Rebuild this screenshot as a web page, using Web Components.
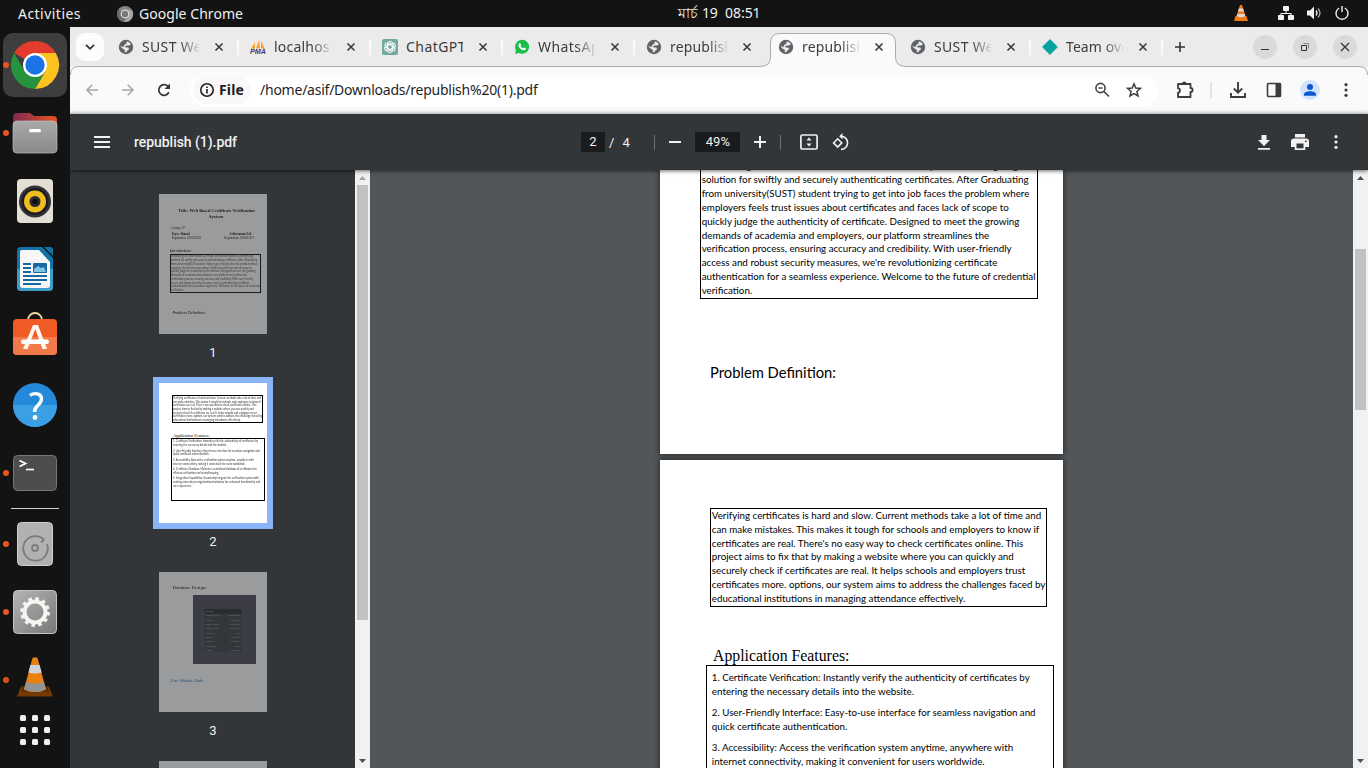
<!DOCTYPE html>
<html lang="en">
<head>
<meta charset="utf-8">
<title>republish (1).pdf</title>
<style>
html,body{margin:0;height:100%;overflow:hidden;background:#131313}
body{font-family:"Noto Sans","Open Sans",sans-serif}
</style>
</head>
<body>
<desktop-shell></desktop-shell>
<script>
const ICONS = {
chromeGrey:`<svg viewBox="0 0 16 16" width="16" height="16"><circle cx="8" cy="8" r="8" fill="#858585"/><path d="M8 8 1.2 4A8 8 0 0 0 7 16l3.400-6z" fill="#6c6c6c"/><path d="M8 4h7a8 8 0 0 1-8 12l4-6z" fill="#a5a5a5"/><circle cx="8" cy="8" r="4.400" fill="#ddd"/><circle cx="8" cy="8" r="3.200" fill="#777"/></svg>`,
chrome:`<svg viewBox="0 0 48 48" width="48" height="48"><path d="M24 24 3.200 12A24 24 0 0 1 44.800 12z" fill="#e33b2e"/><path d="M24 12H44.800A24 24 0 0 1 24 48L34.400 30z" fill="#fcc21f"/><path d="M13.600 30 3.200 12A24 24 0 0 0 24 48L34.400 30z" fill="#27933f"/><circle cx="24" cy="24" r="12" fill="#fff"/><circle cx="24" cy="24" r="9.700" fill="#1b73e8"/></svg>`,
files:`<svg viewBox="0 0 44 42" width="44" height="42"><defs><linearGradient id="a"><stop stop-color="#7d2951"/><stop offset="1" stop-color="#e95420"/></linearGradient><linearGradient id="b" x2="0" y2="1"><stop stop-color="#a9a9a9"/><stop offset="1" stop-color="#898989"/></linearGradient></defs><path d="M0 5a4 4 0 0 1 4-4h13l4 3h19a4 4 0 0 1 4 4v20H0z" fill="url(#a)"/><rect y="9" width="44" height="32" rx="4" fill="url(#b)" stroke="#bdbdbd" stroke-width=".7"/><rect x="16" y="17" width="12" height="3.200" rx="1.500" fill="#fff"/></svg>`,
rhythm:`<svg viewBox="0 0 36 44" width="36" height="44"><rect width="36" height="44" rx="4" fill="#e3dfd3"/><circle cx="18" cy="22.500" r="16" fill="#34323a"/><circle cx="18" cy="22.500" r="13.500" fill="#1d1c22"/><circle cx="18" cy="22.500" r="11" fill="#eebd20"/><circle cx="18" cy="22.500" r="5.500" fill="#2b2930"/><circle cx="18" cy="22.500" r="2.600" fill="#0b0b0b"/></svg>`,
writer:`<svg viewBox="0 0 36 44" width="36" height="44"><path d="M4 0H25L36 11V40a4 4 0 0 1-4 4H4a4 4 0 0 1-4-4V4a4 4 0 0 1 4-4z" fill="#1273a8"/><path d="M0 22h36v18a4 4 0 0 1-4 4H4a4 4 0 0 1-4-4z" fill="#3d9dca"/><path d="M27 0h7l2 2v7z" fill="#1273a8"/><path d="M5 3H22L33 15V38a3 3 0 0 1-3 3H6a3 3 0 0 1-3-3V5a2 2 0 0 1 2-2z" fill="#f7f7f7"/><g fill="#1668a0"><path d="M6 16h8v2H6zM6 20h8v2H6zM6 24h8v2H6zM6 28h24v2H6zM6 32h24v2H6zM6 36h18v2H6z"/><rect x="16" y="16" width="14" height="10" rx="1"/></g><path d="M17 25v-3l4-3 3 2 3-1 2 5z" fill="#7fc3e6"/></svg>`,
software:`<svg viewBox="0 3 44 44" width="44" height="44"><path d="M15 9V8a7 7 0 0 1 14 0v1" fill="none" stroke="#efd9ac" stroke-width="1.800"/><rect y="7" width="44" height="36" rx="4" fill="#ee5b25"/><path d="M0 25h44v14a4 4 0 0 1-4 4H4a4 4 0 0 1-4-4z" fill="#f27949"/><path d="M20 13h5l9 24h-4.500L22.300 17 14.500 37H10z" fill="#fff5ef"/><rect x="8" y="27.500" width="28" height="4.400" rx="2.200" fill="#fff"/></svg>`,
help:`<svg viewBox="0 0 44 44" width="44" height="44"><circle cx="22" cy="22" r="22" fill="#2489da"/><path d="M0 22h44a22 22 0 0 1-44 0z" fill="#3b9fe3"/><path d="M17 12.500c4-3 11.500-2.500 11.500 3.500 0 6-7 6-7 13" fill="none" stroke="#fff" stroke-width="3.400"/><circle cx="22" cy="34.500" r="2.400" fill="#fff"/></svg>`,
terminal:`<svg viewBox="0 0 44 36" width="44" height="36"><rect x=".5" y=".5" width="43" height="35" rx="4" fill="#4d4d4d" stroke="#777"/><path d="M6.500 5.500l6 3-6 3" fill="none" stroke="#fff" stroke-width="1.800"/><path d="M13 14.500h8" stroke="#fff" stroke-width="1.600"/></svg>`,
disk:`<svg viewBox="0 0 36 44" width="36" height="44"><rect x=".5" y=".5" width="35" height="43" rx="4" fill="#b1b1b1" stroke="#d0d0d0"/><path d="M27 17.500a12.300 12.300 0 1 0 3 4.500M27 17.500l-3 3" fill="none" stroke="#7c7c7c" stroke-width="1.800"/><circle cx="18" cy="26" r="3" fill="none" stroke="#7c7c7c" stroke-width="1.800"/></svg>`,
settings:`<svg viewBox="0 0 44 44" width="44" height="44"><defs><linearGradient id="a" x2="1" y2="1"><stop stop-color="#b5b5b5"/><stop offset="1" stop-color="#777"/></linearGradient></defs><rect x=".5" y=".5" width="43" height="43" rx="4" fill="url(#a)" stroke="#c4c4c4"/><circle cx="22" cy="22" r="10.500" fill="none" stroke="#f5f4f0" stroke-width="4"/><circle cx="22" cy="22" r="13.400" fill="none" stroke="#f5f4f0" stroke-width="3" stroke-dasharray="3.500 3.516"/></svg>`,
vlc:`<svg viewBox="0 3.500 38 40" width="38" height="40"><path d="M5 30h28l4 10H1z" fill="#7c3a05"/><path d="M7 30h24l2 5H5z" fill="#5d2a04"/><path d="M16.500 1.500q2.500-1.500 5 0L30 33q-11 5-22 0z" fill="#f58613"/><path d="M14.400 8.500h9.200l2 7.500q-6.600 2-13.200 0z" fill="#d9dfe4"/><path d="M10 25.500q9 3 18 0l2 7.500q-11 5-22 0z" fill="#9a9a9a"/></svg>`,
apps:`<svg viewBox="0 0 30 30" width="30" height="30" fill="#f0f0f0"><g id="r"><rect width="6" height="6" rx="1.500"/><rect x="12" width="6" height="6" rx="1.500"/><rect x="24" width="6" height="6" rx="1.500"/></g><use href="#r" y="12"/><use href="#r" y="24"/></svg>`,
cone:`<svg viewBox="0 0 14 16" width="14" height="16"><path d="M1.500 11h11l1.500 5H0z" fill="#ef7a10"/><path d="M6 0h2l4 12q-5 2.500-10 0z" fill="#ef7a10"/><path d="M5 3.500h4l1 3H4zM3.500 9h7l.7 2.300q-4 1.800-8.400 0z" fill="#d8d8d8"/></svg>`,
net:`<svg viewBox="0 0 16 14" width="16" height="14" fill="#f2f2f2"><rect x="5" y="0" width="6" height="5" rx=".8"/><rect x="0" y="9" width="6" height="5" rx=".8"/><rect x="10" y="9" width="6" height="5" rx=".8"/><path d="M7.500 4h1v3h5v2.500h-1V8h-9v1.500h-1V7h5z"/></svg>`,
vol:`<svg viewBox="0 0 15 14" width="15" height="14" fill="#f2f2f2"><path d="M0 4.500h3L7 .5v13L3 9.500H0z"/><path d="M9 4.500q2 2.500 0 5" fill="none" stroke="#f2f2f2" stroke-width="1.300"/><path d="M11 2.500q4 4.500 0 9" fill="none" stroke="#aaa" stroke-width="1.300"/></svg>`,
power:`<svg viewBox="0 0 14 14" width="14" height="14" fill="none" stroke="#f2f2f2" stroke-width="1.400"><path d="M4.200 2a6 6 0 1 0 5.600 0M7 0v6"/></svg>`,
globe:`<svg viewBox="0 0 16 16" width="16" height="16"><circle cx="8" cy="8" r="7.200" fill="#5f6368"/><path d="M8.500 2.500c2 0 3.700 1.200 4.600 2.800-1 .2-1.600 1.200-2.600 1.200S8 6.600 7.300 7.200c-.5.800.4 1.400 1.700 1.400 1.500 0 2.300.6 1.800 1.600-.6 1.100-1.600 1-2.100 2.200-.3.900-1.300 1-2 .8l.3-1.800c-.4-1.300-2-1-2.600-2.200L2.600 7.800c.2-.4.100-.7.200-1L5 8.300c1-.3.3-1.500 1.200-2.300C7 5.300 8.700 5 8.600 4z" fill="#ececec"/></svg>`,
pma:`<svg viewBox="0 0 16 16" width="16" height="16"><path d="M1 10 5 3v6.500zM6 9.500 9 1l1 8.500zM11 9.500V2l4 8z" fill="#f6a030"/><text x="0" y="15" textLength="16" lengthAdjust="spacingAndGlyphs" font-family="Liberation Sans,sans-serif" font-size="6.500" font-weight="bold" font-style="italic" fill="#3b3b78">PMA</text></svg>`,
gpt:`<svg viewBox="0 0 16 16" width="16" height="16"><rect width="16" height="16" rx="2" fill="#74aa9c"/><g fill="none" stroke="#fff" stroke-width=".9"><g id="q"><path d="M5.700 9.300V5a2.600 2.600 0 0 1 4.900-1.300M5.700 6.600 9.500 4.400l2.600 1.500"/></g><use href="#q" transform="rotate(60 8 8)"/><use href="#q" transform="rotate(120 8 8)"/><use href="#q" transform="rotate(180 8 8)"/><use href="#q" transform="rotate(240 8 8)"/><use href="#q" transform="rotate(300 8 8)"/></g></svg>`,
wa:`<svg viewBox="0 0 16 16" width="16" height="16"><path d="M1 15l1-3.700A7 7 0 1 1 4.800 14z" fill="#18bf48"/><path d="M5.300 4.300c.6-.5 1-.3 1.300.4l.5 1.200c.1.500-.6.900-.6 1.200.5 1.100 1.400 1.800 2.500 2.200.4 0 .7-.9 1.100-.8l1.500.7c.4.200.3.700.1 1.200-.5 1-1.900 1.200-3 .7C6.500 10.200 5.200 8.900 4.600 7.200c-.4-1 0-2.300.7-2.900z" fill="#fff"/></svg>`,
diamond:`<svg viewBox="0 0 16 16" width="16" height="16"><path d="M8 .6 15.400 8 8 15.400.6 8z" fill="#05a3a0" stroke="#05a3a0" stroke-linejoin="round"/></svg>`,
x:`<svg viewBox="0 0 8 8" width="8" height="8" stroke="#3a3a3a" stroke-width="1.600"><path d="M.5.5l7 7M7.500.5l-7 7"/></svg>`,
chev:`<svg viewBox="0 0 10 6" width="10" height="6" fill="none" stroke="#333" stroke-width="1.800"><path d="M1 .8 5 4.800 9 .8"/></svg>`,
plus:`<svg viewBox="0 0 10 10" width="10" height="10" stroke="#333" stroke-width="1.600"><path d="M5 0v10M0 5h10"/></svg>`,
min:`<svg viewBox="0 0 10 10" width="10" height="10" stroke="#333"><path d="M1 7.500h8"/></svg>`,
restore:`<svg viewBox="0 0 10 10" width="10" height="10" fill="none" stroke="#333"><path d="M1.500 3.500h5v5h-5z"/><path d="M3.500 1.500h5v5" stroke="#888"/></svg>`,
wx:`<svg viewBox="0 0 10 10" width="10" height="10" stroke="#333" stroke-width="1.200"><path d="M1 1l8 8M9 1 1 9"/></svg>`,
back:`<svg viewBox="0 0 12 12" width="12" height="12" fill="none" stroke="#a5a5a5" stroke-width="1.500"><path d="M12 6H1M6.300.7 1 6l5.300 5.300"/></svg>`,
fwd:`<svg viewBox="0 0 12 12" width="12" height="12" fill="none" stroke="#a5a5a5" stroke-width="1.500"><path d="M0 6h11M5.700.7 11 6l-5.300 5.300"/></svg>`,
reload:`<svg viewBox="0 0 14 14" width="14" height="14"><path d="M11.900 9.200A5.300 5.300 0 1 1 11 3.400" fill="none" stroke="#3a3a3a" stroke-width="1.800"/><path d="M13 .5V6H7.500z" fill="#3a3a3a"/></svg>`,
info:`<svg viewBox="0 0 14 14" width="14" height="14" fill="none" stroke="#1f1f1f" stroke-width="1.600"><circle cx="7" cy="7" r="6.200"/><path d="M7 6v4.500M7 3.400v1.500"/></svg>`,
zoomout:`<svg viewBox="0 0 16 16" width="16" height="16" fill="none" stroke="#444" stroke-width="1.600"><circle cx="6.500" cy="6" r="4.600"/><path d="M9.800 9.400 15 14.500M4.500 6h4"/></svg>`,
star:`<svg viewBox="0 0 16 16" width="16" height="16" fill="none" stroke="#3c3c3c" stroke-width="1.500"><path d="M8 1.800 9.800 6l4.600.4-3.500 3 1.100 4.500L8 11.500l-4 2.400 1.100-4.500-3.500-3L6.200 6z"/></svg>`,
ext:`<svg viewBox="0 0 18 18" width="18" height="18"><path d="M2 3h12.500v4c2.800 0 2.800 4 0 4v5H2v-4.300c2.600 0 2.600-4.400 0-4.400z" fill="none" stroke="#3c3c3c" stroke-width="1.800" stroke-linejoin="round"/><path d="M6 3a2.200 2.400 0 0 1 4.400 0z" fill="#3c3c3c"/></svg>`,
dl:`<svg viewBox="0 0 16 16" width="16" height="16" fill="none" stroke="#3c3c3c" stroke-width="1.900"><path d="M1 11v4h14v-4M8 0v10.500M3.800 6.500 8 10.700l4.200-4.200"/></svg>`,
panel:`<svg viewBox="0 0 16 16" width="16" height="16"><rect x="1.500" y="1.500" width="13" height="13" rx="1" fill="none" stroke="#3c3c3c" stroke-width="1.600"/><path d="M9.500 1h5.500v14H9.500z" fill="#3c3c3c"/></svg>`,
avatar:`<svg viewBox="0 0 20 20" width="20" height="20"><circle cx="10" cy="10" r="10" fill="#d3e3fd"/><circle cx="10" cy="7" r="3" fill="#0b57d0"/><path d="M4 15.800v-1.500c0-4 12-4 12 0v1.500z" fill="#0b57d0"/></svg>`,
dots:`<svg viewBox="0 0 4 16" width="4" height="16" fill="currentColor"><circle cx="2" cy="2.700" r="1.600"/><circle cx="2" cy="8" r="1.600"/><circle cx="2" cy="13.300" r="1.600"/></svg>`,
menu:`<svg viewBox="0 0 16 12" width="16" height="12" fill="#f1f1f1"><path d="M0 0h16v2H0zM0 5h16v2H0zM0 10h16v2H0z"/></svg>`,
pminus:`<svg viewBox="0 0 12 12" width="12" height="12" fill="#f1f1f1"><path d="M0 5h12v2H0z"/></svg>`,
pplus:`<svg viewBox="0 0 12 12" width="12" height="12" fill="#f1f1f1"><path d="M0 5h5V0h2v5h5v2H7v5H5V7H0z"/></svg>`,
fit:`<svg viewBox="0 0 18 16" width="18" height="16"><rect x=".9" y="1" width="16.200" height="14" rx="1.500" fill="none" stroke="#f1f1f1" stroke-width="1.700"/><path d="M9 3.500l2.500 3h-5zM9 12.500l2.500-3h-5z" fill="#f1f1f1"/></svg>`,
rotate:`<svg viewBox="0 0 18 18" width="18" height="18" fill="none" stroke="#f1f1f1" stroke-width="1.600"><path d="M5.700 5.800 9.800 9.900l-4.100 4.100-4.100-4.100z"/><path d="M9 3.200a6.600 6.600 0 1 1 0 13.200"/><path d="M10.500 0v6.400L7.200 3.200z" fill="#f1f1f1" stroke="none"/></svg>`,
pdl:`<svg viewBox="0 0 12 15" width="12" height="15" fill="#f1f1f1"><path d="M3.500 0h5v5H12l-6 6-6-6h3.500zM0 13h12v1.700H0z"/></svg>`,
print:`<svg viewBox="0 0 18 16" width="18" height="16"><path d="M4 0h10v3.500H4zM3 4.500h12a3 3 0 0 1 3 3V13h-3.700v3H3.700v-3H0V7.500a3 3 0 0 1 3-3z" fill="#f1f1f1"/><path d="M5.500 9.500h7v4.800h-7z" fill="#323639"/><circle cx="14.800" cy="7.300" r=".9" fill="#323639"/></svg>`
};
const tag = (name, html, extra) => customElements.define(name, class extends HTMLElement {
  connectedCallback() {
    if (this.shadowRoot) return;
    this.attachShadow({mode: 'open'}).innerHTML = typeof html === 'function' ? html(this) : html;
    if (extra) extra(this);
  }
});

/* One line of text set to a given width, by font size or, with "track", by letter spacing. */
const lines = [];
tag('fit-text', `<style>:host{display:block;white-space:pre;flex:none}span{display:inline-block}</style><span><slot></slot></span>`, el => lines.push(el));
function fitLine(el) {
  const w = +el.getAttribute('w'), s = el.shadowRoot.querySelector('span');
  const now = s.getBoundingClientRect().width;
  if (!w || !now) return;
  if (el.hasAttribute('track')) s.style.letterSpacing = (w - now) / [...el.textContent].length + 'px';
  else s.style.fontSize = parseFloat(getComputedStyle(s).fontSize) * w / now + 'px';
}

tag('ui-icon', el => `<style>:host{display:flex;align-items:center;justify-content:center;flex:none}svg{display:block;overflow:visible}</style>${ICONS[el.getAttribute('name')]}`);

tag('top-bar', `<style>
:host{display:grid;grid-template-columns:1fr auto 1fr;height:27px;align-items:center;background:#131313;color:#f0f0f0;font-size:14px;line-height:26px}
.l{display:flex;align-items:center;padding-left:18px}.l ui-icon{margin:0 6px 0 36px}
.r{display:flex;align-items:center;justify-content:flex-end;padding:0 19px 1px 0}
.c{margin-left:71px;padding-bottom:1px}
</style><div class="l"><fit-text track w="63">Activities</fit-text><ui-icon name="chromeGrey"></ui-icon><fit-text track w="104">Google Chrome</fit-text></div>
<div class="c"><fit-text track w="82">মার্চ 19  08:51</fit-text></div>
<div class="r"><ui-icon name="cone" style="margin-right:30px"></ui-icon><ui-icon name="net" style="margin-right:13px"></ui-icon><ui-icon name="vol" style="margin-right:13px"></ui-icon><ui-icon name="power"></ui-icon></div>`);

tag('dock-item', el => `<style>
:host{display:grid;grid-template-columns:3px 64px 3px;height:68px;align-items:center;position:relative}
.tile{grid-column:2;height:64px;border-radius:10px;display:grid;place-items:center;${el.hasAttribute('active') ? 'background:#3e3e3e' : ''}}
.dot{position:absolute;left:3px;top:31px;width:6px;height:6px;border-radius:50%;background:#e95420}
</style><div class="tile"><ui-icon name="${el.getAttribute('icon')}"></ui-icon></div>${el.hasAttribute('running') ? '<div class="dot"></div>' : ''}`);

tag('dock-bar', `<style>
:host{display:flex;flex-direction:column;background:#131313;padding-top:4px;overflow:hidden}
hr{width:48px;height:1px;border:0;background:#cfcfcf;margin:1px auto;flex:none}
dock-item{flex:none}.vlc{opacity:.95}.apps{margin-top:1px}
</style>
<dock-item icon="chrome" active running></dock-item><dock-item icon="files" running></dock-item><dock-item icon="rhythm"></dock-item><dock-item icon="writer"></dock-item><dock-item icon="software"></dock-item><dock-item icon="help"></dock-item><dock-item icon="terminal" running></dock-item>
<hr><dock-item icon="disk" running></dock-item><dock-item icon="settings" running></dock-item><dock-item icon="vlc" running class="vlc"></dock-item>
<ui-icon name="apps" class="apps"></ui-icon>`);

tag('browser-tab', el => `<style>
:host{display:flex;align-items:center;width:132px;height:40px;flex:none;padding-left:11px;box-sizing:border-box;position:relative;color:#3c3c3c;font-size:14px}
.t{width:63px;margin:0 11px 0 8px;overflow:hidden;line-height:24px;-webkit-mask-image:linear-gradient(90deg,#000 66%,rgba(0,0,0,.1) 100%)}
.t.full{-webkit-mask-image:none}
ui-icon.x{width:18px}
i{margin-left:9px;width:2px;height:16px;background:${el.hasAttribute('sep') ? '#fbfbfb' : 'transparent'}}
</style><ui-icon name="${el.getAttribute('icon')}"></ui-icon><div class="t ${el.hasAttribute('full') ? 'full' : ''}"><fit-text track w="${el.getAttribute('w')}">${el.textContent}</fit-text></div><ui-icon class="x" name="x"></ui-icon><i></i>`);

tag('tab-strip', `<style>
:host{display:flex;height:40px;background:#ebebeb;position:relative;align-items:center;z-index:1}
.edge{position:absolute;left:0;top:0;pointer-events:none}
.list{width:28px;height:28px;border-radius:9px;background:#fcfcfc;margin:0 3px 0 6px;flex:none}
.add{width:18px;margin-left:8px}
.win{margin-left:auto;display:flex;gap:16px;padding-right:11px}
.win ui-icon{width:24px;height:24px;border-radius:50%;background:#dadada}
.list,browser-tab,.add,.win{position:relative}
</style>
<svg class="edge" width="1298" height="50"><path d="M0 48Q0 39.500 9 39.500H690Q700.500 39.500 700.500 30V16Q700.500 6.500 710 6.500H816Q825.500 6.500 825.500 16V30Q825.500 39.500 836 39.500H1289Q1298 39.500 1298 48V50H0z" fill="#fafafa"/><path d="M.5 48Q.5 39.500 9 39.500H690Q700.500 39.500 700.500 30V16Q700.500 6.500 710 6.500H816Q825.500 6.500 825.500 16V30Q825.500 39.500 836 39.500H1289Q1297.500 39.500 1297.500 48" fill="none" stroke="#ababab"/></svg>
<ui-icon class="list" name="chev"></ui-icon>
<browser-tab icon="globe" w="69" sep>SUST Web</browser-tab><browser-tab icon="pma" w="61" sep>localhost</browser-tab><browser-tab icon="gpt" w="60" sep full>ChatGPT</browser-tab><browser-tab icon="wa" w="71" sep>WhatsApp</browser-tab><browser-tab icon="globe" w="63">republish</browser-tab><browser-tab icon="globe" w="63">republish</browser-tab><browser-tab icon="globe" w="69" sep>SUST Web</browser-tab><browser-tab icon="diamond" w="69" sep>Team over</browser-tab>
<ui-icon class="add" name="plus"></ui-icon><div class="win"><ui-icon name="min"></ui-icon><ui-icon name="restore"></ui-icon><ui-icon name="wx"></ui-icon></div>`);

tag('address-bar', `<style>
:host{display:flex;height:46px;box-sizing:border-box;background:#fafafa;align-items:center;padding-left:4px;color:#3c3c3c;font-size:14px}
.n{width:36px}
.pill{display:flex;align-items:center;width:968px;height:34px;margin-left:8px;border-radius:17px;background:#fff;box-sizing:border-box;padding-left:3px;flex:none}
.chip{display:flex;align-items:center;gap:5px;width:58px;height:28px;border-radius:14px;background:#f8f8f8;padding-left:7px;box-sizing:border-box;color:#1f1f1f;font-weight:700;margin-right:9px}
.url{color:#1f1f1f;margin-right:auto}fit-text{padding-bottom:1px}
.p{width:32px}.pill .p:last-child{margin-right:8px}
.s{width:2px;height:16px;background:#e4e4e4}
</style><ui-icon class="n" name="back"></ui-icon><ui-icon class="n" name="fwd"></ui-icon><ui-icon class="n" name="reload"></ui-icon>
<div class="pill"><div class="chip"><ui-icon name="info"></ui-icon><fit-text track w="25">File</fit-text></div><fit-text class="url" track w="277.500">/home/asif/Downloads/republish%20(1).pdf</fit-text><ui-icon class="p" name="zoomout"></ui-icon><ui-icon class="p" name="star"></ui-icon></div>
<ui-icon name="ext" style="width:36px;margin:0 7px 0 9px"></ui-icon><div class="s"></div><ui-icon class="n" name="dl" style="margin-left:8px"></ui-icon><ui-icon class="n" name="panel"></ui-icon><ui-icon class="n" name="avatar"></ui-icon><ui-icon class="n" name="dots"></ui-icon>`);

tag('pdf-toolbar', `<style>
:host{display:grid;grid-template-columns:511px 1fr auto;height:57px;box-sizing:border-box;border-top:1px solid #c4c6c8;background:#323639;color:#f1f1f1;align-items:center;font:13px Roboto,sans-serif;box-shadow:0 1px 4px rgba(0,0,0,.6);position:relative;z-index:2}
.l,.c,.r{display:flex;align-items:center}
.l{padding-left:24px;gap:24px;font-size:14px;font-weight:500}
.b{background:#191b1c;height:20px;line-height:20px;text-align:center}
.s{width:1px;height:15px;background:#6d7072}
.r{padding-right:14px}.r ui-icon{width:36px}
</style><div class="l"><ui-icon name="menu"></ui-icon><fit-text track w="103">republish (1).pdf</fit-text></div>
<div class="c"><div class="b" style="width:24px">2</div><span style="margin:0 8px 0 4px">/</span><span style="width:32px">4</span><div class="s"></div><ui-icon name="pminus" style="width:40px"></ui-icon><div class="b" style="width:45px">49%</div><ui-icon name="pplus" style="width:40px"></ui-icon><div class="s"></div><ui-icon name="fit" style="width:36px;margin-left:10px"></ui-icon><ui-icon name="rotate" style="width:28px"></ui-icon></div>
<div class="r"><ui-icon name="pdl"></ui-icon><ui-icon name="print"></ui-icon><ui-icon name="dots"></ui-icon></div>`);

tag('scroll-bar', el => `<style>
:host{display:flex;flex-direction:column;width:15px;background:#f1f1f1;flex:none}
.a{height:15px;display:grid;place-items:center}
.thumb{margin:${+el.getAttribute('from')}px 2px auto;height:${el.getAttribute('size')}px;background:#c1c1c1}
svg{display:block}
</style><div class="a"><svg width="7" height="4"><path d="M0 4 3.500 0 7 4z" fill="${el.getAttribute('up')}"/></svg></div><div class="thumb"></div><div class="a"><svg width="7" height="4"><path d="M0 0 3.500 4 7 0z" fill="#505050"/></svg></div>`);

/* Thumbnail drawings: a page is 324 by 420 units. */
const row = (x, y, end, t, o = '') => `<text x="${x}" y="${y}" textLength="${end - x}" lengthAdjust="spacingAndGlyphs" ${o}>${t}</text>`;
const INTRO = [['Introducing the Web-Based Certificate Verification System: a cutting-edge',284],['solution for swiftly and securely authenticating certificates. After Graduating',294],['from university(SUST) student trying to get into job faces the problem where',296],['employers feels trust issues about certificates and faces lack of scope to',278],['quickly judge the authenticity of certificate. Designed to meet the growing',290],['demands of academia and employers, our platform streamlines the',264],['verification process, ensuring accuracy and credibility. With user-friendly',282],['access and robust security measures, we\'re revolutionizing certificate',272],['authentication for a seamless experience. Welcome to the future of credential',304],['verification.',74]];
const PROB = [['Verifying certificates is hard and slow. Current methods take a lot of time and',306],['can make mistakes. This makes it tough for schools and employers to know if',305],['certificates are real. There\'s no easy way to check certificates online. This',292],['project aims to fix that by making a website where you can quickly and',284],['securely check if certificates are real. It helps schools and employers trust',293],['certificates more. options, our system aims to address the challenges faced by',309],['educational institutions in managing attendance effectively.',245]];
const FEAT = [[178,'1. Certificate Verification: Instantly verify the authenticity of certificates by',297],[189,'entering the necessary details into the website.',204],[207,'2. User-Friendly Interface: Easy-to-use interface for seamless navigation and',302],[216,'quick certificate authentication.',150],[234,'3. Accessibility: Access the verification system anytime, anywhere with',284],[246,'internet connectivity, making it convenient for users worldwide.',259],[261,'4. Certificate Database: Maintain a centralized database of certificates for',293],[273,'efficient verification and record-keeping.',180],[288,'5. Integration Capabilities: Seamlessly integrate the verification system with',300],[300,'existing university or organizational websites for enhanced functionality and',303],[312,'user experience.',98]];
const DBROWS = [['registration_no',187,'bigint(20)',207],['name',162,'varchar(50)',214],['father_name',180,'varchar(50)',214],['mother_name',183,'varchar(50)',214],['session',167,'year',231],['dept',158,'varchar(50)',214],['email',164,'varchar(50)',214],['graduation',174,'double',226],['cgpa',159,'varchar(50)',214]];
const S = 'font-family="Liberation Serif,serif"', B = 'font-weight="bold"';
const THUMBS = {
1: row(58,54,287,'Title: Web Based Certificate Verification',`${S} ${B} font-size="13"`) + row(150,73,192,'System',`${S} ${B} font-size="13"`)
 + row(37,105,78,'Group: 27',`${S} font-size="9"`) + row(38,123,92,'Fayez Ahmad',`${S} ${B} font-size="9"`) + row(38,135,126,'Registration: 2020331018',`${S} font-size="9"`)
 + row(211,123,277,'Arifuzzaman Asif',`${S} ${B} font-size="9"`) + row(196,135,285,'Registration: 2020331077',`${S} font-size="9"`)
 + row(32,173,98,'Introduction:',`${S} font-size="12"`) + `<rect x="34.500" y="181.500" width="270" height="114" fill="none" stroke="#000" stroke-width="3"/><g opacity=".8">`
 + INTRO.map(([t, e], i) => row(36, 190 + i * 11.3, e, t)).join('') + '</g>' + row(41,359,140,'Problem Definition:','font-size="12"'),
2: `<rect x="40.500" y="37.500" width="270" height="81" fill="none" stroke="#000" stroke-width="3"/><g opacity=".85">` + PROB.map(([t, e], i) => row(42, 48 + i * 11, e, t)).join('') + '</g>'
 + row(43,162,152,'Application Features:',`${S} font-size="12.500"`) + `<rect x="37.500" y="166.500" width="279" height="186" fill="none" stroke="#000" stroke-width="3"/><g opacity=".85">` + FEAT.map(([y, t, e]) => row(42, y, e, t)).join('') + '</g>',
3: row(41,51,143,'Database Design:',`${S} font-size="14"`) + `<rect x="102" y="69" width="189" height="207" fill="#454351"/><rect x="137" y="111" width="110" height="129" fill="#34363c"/><rect x="137" y="111" width="110" height="13" fill="#202226"/>`
 + `<g fill="#aaa" font-size="7.500">` + row(141,120,162,'student') + DBROWS.map(([a, e, b, x], i) => row(141, 133 + i * 13, e, a) + row(x, 133 + i * 13, 243, b)).join('') + `</g>`
 + row(36,330,134,'Live Website Link:',`${S} font-size="12" fill="#0d57b1"`),
4: ''
};
tag('page-thumb', el => {
  const n = el.getAttribute('page'), on = el.hasAttribute('current');
  return `<style>
:host{display:grid;justify-items:center;height:189px;flex:none;grid-template-rows:152px 1fr;font:13px/25px Roboto,sans-serif;color:#f1f1f1}
.f{padding:6px;height:140px;${on ? 'background:#8ab4f8' : ''}}
.p{width:108px;height:140px;background:#fff;opacity:${on ? 1 : .5};overflow:hidden}
svg{display:block}
</style><div class="f"><div class="p"><svg width="108" height="140" viewBox="0 0 324 420" font-family="Lato,sans-serif" font-size="8.500" fill="#000">${THUMBS[n]}</svg></div></div><div>${n}</div>`;
});

tag('pdf-sidebar', `<style>
:host{display:flex;width:300px;background:#323639;overflow:hidden;flex:none}
.list{flex:1;padding:18px 0 0 1px;overflow:hidden;display:flex;flex-direction:column}
</style><div class="list"><page-thumb page="1"></page-thumb><page-thumb page="2" current></page-thumb><page-thumb page="3"></page-thumb><page-thumb page="4"></page-thumb></div><scroll-bar from="0" size="435" up="#a3a3a3"></scroll-bar>`);

const para = (ls, ws) => ls.map(([t], i) => `<fit-text w="${ws[i]}">${t}</fit-text>`).join('');
tag('pdf-page', `<style>:host{display:block;width:403px;background:#fff;box-shadow:0 0 5px 1px rgba(0,0,0,.45);box-sizing:border-box;flex:none;overflow:hidden}</style><slot></slot>`);
tag('text-box', `<style>:host{display:block;border:1px solid #000;box-sizing:border-box;font-size:10.500px;line-height:13.830px}::slotted(fit-text){height:13.830px}</style><slot></slot>`);

tag('pdf-viewer', `<style>
:host{display:flex;background:#525659;overflow:hidden;flex:1;font-family:Lato,sans-serif;color:#000}
.pages{flex:1;display:flex;flex-direction:column;align-items:center;gap:6px;overflow:hidden}
.one{height:284px}.two{height:500px;padding-top:48px}
h2{margin:0;font-weight:400;font-size:16px;line-height:22px}
.i{margin:-12px 0 0 40px;width:338px;height:141px;padding:.4px 0 0 .7px}
.v{margin-left:50px;width:337px;height:99px;padding:0 0 0 .8px}
.f{margin-left:46px;width:348px;height:250px;padding:5px 0 0 4.800px}
.f .g{margin-bottom:7.400px}
fit-text{height:13.830px}h2 fit-text{height:22px}
.f .g fit-text{line-height:13.830px}
</style><div class="pages">
<pdf-page class="one"><text-box class="i">${para(INTRO,[322,327,328.2,307.2,318.2,287.8,310.5,296,334.2,50.5])}</text-box><h2 style="margin:62px 0 0 50px"><fit-text w="126">Problem Definition:</fit-text></h2></pdf-page>
<pdf-page class="two"><text-box class="v">${para(PROB,[329.8,328,312,302.5,314,334,253.8])}</text-box>
<h2 style="margin:38px 0 -2px 53px;font-family:'Liberation Serif',serif"><fit-text w="136.500">Application Features:</fit-text></h2>
<text-box class="f">${[0,2,4].map(i => `<div class="g">${para([[FEAT[i][1]],[FEAT[i+1][1]]],[[318,202.5],[324,135.5],[301.6,273]][i/2])}</div>`).join('')}</text-box></pdf-page>
</div><scroll-bar from="64" size="161" up="#505050"></scroll-bar>`);

tag('browser-window', `<style>:host{display:flex;flex-direction:column;min-width:0;overflow:hidden}.m{display:flex;flex:1;min-height:0}tab-strip,address-bar,pdf-toolbar{flex:none}</style>
<tab-strip></tab-strip><address-bar></address-bar><pdf-toolbar></pdf-toolbar><div class="m"><pdf-sidebar></pdf-sidebar><pdf-viewer></pdf-viewer></div>`);
tag('desktop-shell', `<style>:host{display:grid;grid-template:27px 741px / 70px 1298px;width:1368px;height:768px;overflow:hidden}top-bar{grid-column:1/3}</style><top-bar></top-bar><dock-bar></dock-bar><browser-window></browser-window>`);
lines.forEach(fitLine);
</script>
</body>
</html>
